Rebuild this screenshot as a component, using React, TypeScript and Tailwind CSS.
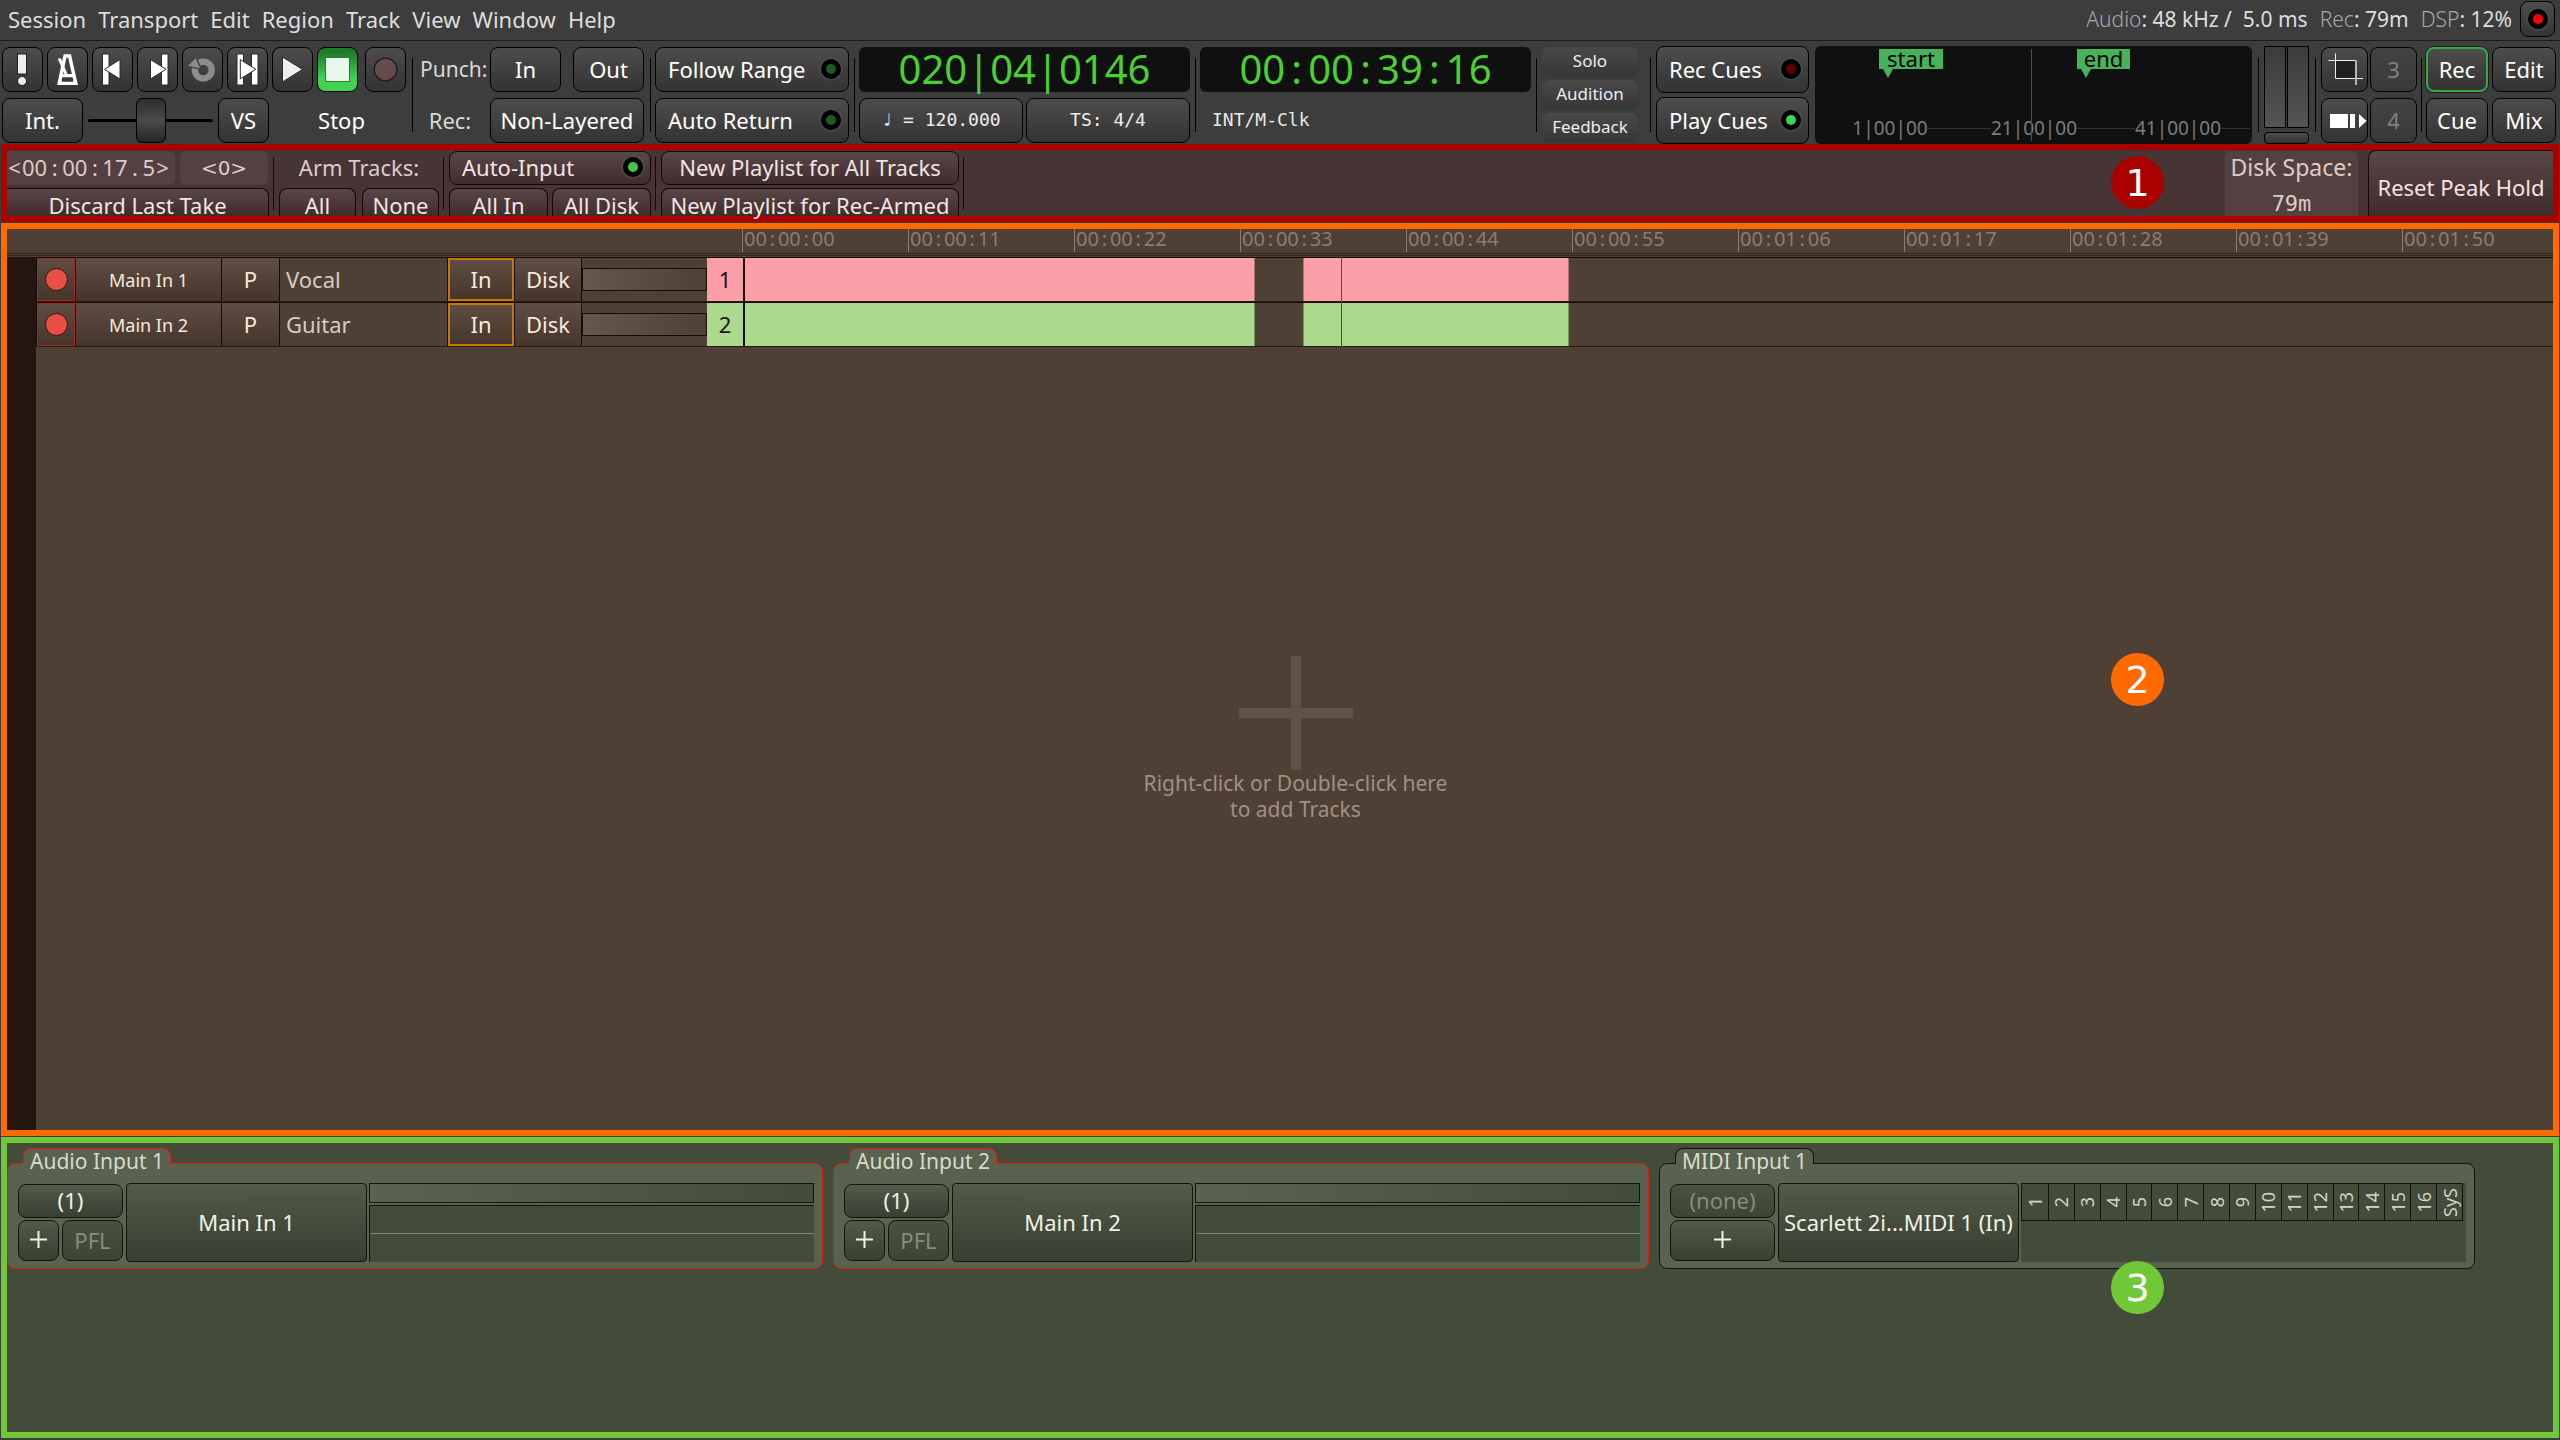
import React from "react";
import { twMerge } from "tailwind-merge";

type Children = { children?: React.ReactNode };

const cx = (...parts: (string | false | undefined)[]) => twMerge(parts.filter(Boolean).join(" "));

/* ---------- shared controls ---------- */

type BtnProps = React.ButtonHTMLAttributes<HTMLButtonElement> & { tone?: "normal" | "dim" | "soft" };

function Btn({ tone = "normal", className, children, ...rest }: BtnProps) {
  return (
    <button
      type="button"
      className={cx(
        "flex shrink-0 items-center justify-center rounded-lg pb-0.5 whitespace-nowrap",
        tone === "normal" && "border border-black bg-linear-to-b from-[#4e4c4d] to-[#343334] text-white",
        tone === "dim" && "border border-black bg-linear-to-b from-[#444344] to-[#393939] text-[#808080]",
        tone === "soft" && "bg-linear-to-b from-[#4a494a] to-[#373637] text-[#eeeeee]",
        className,
      )}
      {...rest}
    >
      {children}
    </button>
  );
}

function Led({ color }: { color: string }) {
  return (
    <span className="flex size-5 shrink-0 items-center justify-center rounded-full bg-black ring-2 ring-[#555555]/40">
      <span className={cx("size-2.5 rounded-full", color)} />
    </span>
  );
}

function LedBtn({ label, led, className }: { label: string; led: string; className: string }) {
  return (
    <Btn className={cx("justify-between pr-[7px] pl-3", className)}>
      <span>{label}</span>
      <Led color={led} />
    </Btn>
  );
}

function Divider({ className }: { className?: string }) {
  return <span className={cx("h-[74px] w-px shrink-0 self-center bg-black", className)} />;
}

function Digits({ value, sep }: { value: string; sep: string }) {
  return (
    <span className="inline-flex whitespace-pre">
      {value
        .split(/([:|<>.])/)
        .filter(Boolean)
        .map((part, i) =>
          /[:|<>.]/.test(part) ? (
            <span key={i} className={cx("text-center", sep)}>
              {part}
            </span>
          ) : (
            <span key={i}>{part}</span>
          ),
        )}
    </span>
  );
}

function Badge({ n, className }: { n: string; className: string }) {
  return (
    <span
      className={cx(
        "absolute flex size-[53px] items-center justify-center rounded-full font-['DejaVu_Sans'] text-[38px] leading-none text-white",
        className,
      )}
    >
      {n}
    </span>
  );
}

/* ---------- menu bar ---------- */

const MENUS = ["Session", "Transport", "Edit", "Region", "Track", "View", "Window", "Help"];

function Stat({ name, children }: Children & { name: string }) {
  return (
    <span className="whitespace-pre">
      <span className="font-light text-[#a8a8a8]">{name}</span>: {children}
    </span>
  );
}

function MenuBar() {
  return (
    <header className="flex h-[41px] items-center justify-between border-b border-[#1c1c1c] pr-[5px] pb-0.5 pl-2 text-[#dedede]">
      <nav className="flex gap-3">
        {MENUS.map((m) => (
          <button type="button" key={m}>
            {m}
          </button>
        ))}
      </nav>
      <div className="flex items-center gap-3 text-[21px]">
        <Stat name="Audio">48 kHz /  5.0 ms</Stat>
        <Stat name="Rec">79m</Stat>
        <Stat name="DSP">12%</Stat>
        <Btn className="-ml-1 h-9 w-[35px] pb-0" aria-label="Log">
          <span className="flex size-5 items-center justify-center rounded-full bg-black ring-2 ring-[#555555]/40">
            <span className="size-2.5 rounded-full bg-[#ff0000]" />
          </span>
        </Btn>
      </div>
    </header>
  );
}

/* ---------- transport toolbar ---------- */

const ICONS: { name: string; art: React.ReactNode }[] = [
  {
    name: "MIDI Panic",
    art: (
      <g fill="#eeeeee" stroke="#1c1c1c">
        <rect x="15.5" y="7" width="9" height="20" />
        <circle cx="20" cy="34" r="4.5" />
      </g>
    ),
  },
  {
    name: "Metronome",
    art: (
      <g fill="none" stroke="#ffffff" strokeWidth="3.4">
        <path d="M18 9H22.6L28.8 36.4H12.2Z" />
        <path d="M14 28.6H27M13 33.6V36M28 33.6V36" />
        <path d="M12.2 11.5L19.4 28" strokeWidth="3" />
      </g>
    ),
  },
  {
    name: "Go to Start",
    art: (
      <g fill="#ffffff" stroke="#2a2a2a">
        <rect x="10.5" y="7" width="6.5" height="31" />
        <path d="M28 12.5V32L12.5 22.3Z" />
      </g>
    ),
  },
  {
    name: "Go to End",
    art: (
      <g fill="#ffffff" stroke="#2a2a2a">
        <rect x="24.5" y="7" width="6.5" height="31" />
        <path d="M13.5 12.5V32L29 22.3Z" />
      </g>
    ),
  },
  {
    name: "Loop",
    art: (
      <g>
        <circle cx="21.3" cy="23" r="8.4" fill="none" stroke="#8c8c8c" strokeWidth="6.4" />
        <path d="M5.5 19.5L14.2 10.5L19.3 22Z" fill="#8c8c8c" />
        <path d="M14.3 11L19.3 22L6 19.6" fill="none" stroke="#3f3f3f" strokeWidth="1.3" />
      </g>
    ),
  },
  {
    name: "Play Range",
    art: (
      <g fill="#ffffff" stroke="#2a2a2a">
        <rect x="10" y="7" width="6.5" height="31" />
        <rect x="24.5" y="7" width="6.5" height="31" />
        <path d="M13.3 12.5V32L28.7 22.3Z" />
      </g>
    ),
  },
  { name: "Play", art: <path d="M10.5 10V35L30.5 22.4Z" fill="#eeeeee" stroke="#2a2a2a" /> },
  {
    name: "Stop",
    art: <rect x="8.5" y="10.5" width="24" height="24" fill="#e9f7ec" stroke="#2c7a38" />,
  },
  { name: "Record", art: <circle cx="20.5" cy="22.5" r="11.3" fill="#664b4b" stroke="#1a1a1a" strokeWidth="1.3" /> },
];

function TransportGroup() {
  return (
    <div className="flex shrink-0 flex-col gap-1.5">
      <div className="flex gap-1">
        {ICONS.map(({ name, art }) => (
          <Btn
            key={name}
            aria-label={name}
            className={cx(
              "h-[45px] w-[41px] pb-0",
              name === "Stop" && "from-[#207a2c] from-10% to-[#3fd350] to-70%",
              name === "Record" && "ml-[3px]",
            )}
          >
            <svg width="41" height="45" viewBox="0 0 41 45" className="shrink-0">
              {art}
            </svg>
          </Btn>
        ))}
      </div>
      <div className="flex items-center">
        <Btn className="h-[45px] w-[81px]">Int.</Btn>
        <input
          type="range"
          aria-label="Shuttle speed"
          className="mx-[5px] h-[45px] w-[125px] appearance-none bg-transparent [&::-webkit-slider-runnable-track]:h-[3px] [&::-webkit-slider-runnable-track]:rounded-full [&::-webkit-slider-runnable-track]:bg-black [&::-webkit-slider-thumb]:-mt-[21px] [&::-webkit-slider-thumb]:h-[45px] [&::-webkit-slider-thumb]:w-[30px] [&::-webkit-slider-thumb]:appearance-none [&::-webkit-slider-thumb]:rounded-md [&::-webkit-slider-thumb]:border [&::-webkit-slider-thumb]:border-black [&::-webkit-slider-thumb]:bg-linear-to-b [&::-webkit-slider-thumb]:from-[#2e2e2e] [&::-webkit-slider-thumb]:via-[#4a4a4a] [&::-webkit-slider-thumb]:to-[#262626]"
        />
        <Btn className="h-[45px] w-[51px]">VS</Btn>
        <span className="flex-1 pb-0.5 pl-2 text-center text-white">Stop</span>
      </div>
    </div>
  );
}

function PunchGroup() {
  return (
    <div className="ml-px grid shrink-0 grid-cols-[72px_154px] gap-x-1 gap-y-1.5 text-[#d8d8d8]">
      <span className="self-center pb-0.5 pl-1.5 text-[21px]">Punch:</span>
      <div className="flex justify-between">
        <Btn className="h-[45px] w-[71px]">In</Btn>
        <Btn className="h-[45px] w-[71px]">Out</Btn>
      </div>
      <span className="self-center pb-0.5 text-center">Rec:</span>
      <Btn className="h-[45px]">Non-Layered</Btn>
    </div>
  );
}

function Flag({ label, className }: { label: string; className: string }) {
  return (
    <span className={cx("absolute top-[3px]", className)}>
      <span className="flex h-5 items-center justify-center bg-[#46b35a] pb-0.5 text-black">{label}</span>
      <svg width="18" height="9" viewBox="0 0 18 9" className="block">
        <path d="M4 0H14L9 9Z" fill="#46b35a" />
      </svg>
    </span>
  );
}

function MiniTimeline() {
  return (
    <div className="relative ml-1.5 flex h-[98px] min-w-0 flex-1 items-end rounded-md bg-[#101010] pb-[3px] pl-[3px]">
      {["1|00|00", "21|00|00", "41|00|00"].map((t, i) => (
        <span key={t} className="flex w-36 items-center text-[19px] text-[#7c7c7c]">
          <span className={cx("h-px flex-1", i > 0 && "bg-[#333333]")} />
          <span className="leading-[26px]">{t}</span>
          <span className="h-px flex-1 bg-[#333333]" />
        </span>
      ))}
      <Flag label="start" className="left-16 w-16" />
      <Flag label="end" className="left-[262px] w-[53px]" />
      <span className="absolute top-[3px] bottom-[3px] left-[216px] w-px bg-[#e01010]" />
    </div>
  );
}

function Clock({ value, children }: Children & { value: string }) {
  return (
    <div className="ml-1 flex w-[331px] shrink-0 flex-col gap-1.5">
      <div className="flex h-[45px] items-center justify-center rounded-md bg-[#101010] pb-0.5 text-[40px] leading-10 text-[#4ccf30]">
        <Digits value={value} sep="w-[23px]" />
      </div>
      {children}
    </div>
  );
}

function Toolbar() {
  return (
    <div className="flex h-[103px] items-center pt-[5px] pr-1 pl-0.5">
      <TransportGroup />
      <Divider className="ml-1.5" />
      <PunchGroup />
      <Divider className="ml-1.5" />
      <div className="ml-1 flex shrink-0 flex-col gap-1.5">
        <LedBtn label="Follow Range" led="bg-[#1f5a22]" className="h-[45px] w-[194px]" />
        <LedBtn label="Auto Return" led="bg-[#1f5a22]" className="h-[45px] w-[194px]" />
      </div>
      <Divider className="ml-[5px]" />
      <Clock value="020|04|0146">
        <div className="flex justify-between font-['DejaVu_Sans_Mono'] text-lg">
          <Btn className="h-[45px] w-[164px] text-[#eeeeee]">♩ = 120.000</Btn>
          <Btn className="h-[45px] w-[164px] text-[#eeeeee]">TS: 4/4</Btn>
        </div>
      </Clock>
      <Divider className="ml-[5px]" />
      <Clock value="00:00:39:16">
        <span className="flex h-[45px] items-center pb-0.5 pl-3 font-['DejaVu_Sans_Mono'] text-lg text-[#e8e8e8]">
          INT/M-Clk
        </span>
      </Clock>
      <Divider className="ml-[5px]" />
      <div className="ml-[5px] flex shrink-0 flex-col gap-[3px] text-[17px]">
        <Btn tone="soft" className="h-[30px] w-24">Solo</Btn>
        <Btn tone="soft" className="h-[30px] w-24">Audition</Btn>
        <Btn tone="soft" className="h-[30px] w-24">Feedback</Btn>
      </div>
      <Divider className="ml-3" />
      <div className="ml-[5px] flex shrink-0 flex-col gap-1">
        <LedBtn label="Rec Cues" led="bg-[#600000]" className="h-[47px] w-[153px]" />
        <LedBtn label="Play Cues" led="bg-[#3fd350]" className="h-[47px] w-[153px]" />
      </div>
      <MiniTimeline />
      <Divider className="ml-1.5" />
      <div className="ml-[5px] flex w-[45px] shrink-0 flex-col gap-1">
        <div className="grid h-[82px] grid-cols-2 gap-px">
          <span className="border border-black bg-linear-to-b from-[#3b3b3b] to-[#555555]" />
          <span className="border border-black bg-linear-to-b from-[#3b3b3b] to-[#555555]" />
        </div>
        <Btn className="h-3 rounded-sm" aria-label="Reset peak" />
      </div>
      <Divider className="ml-1.5" />
      <div className="ml-[5px] grid shrink-0 grid-cols-[47px_47px] gap-x-0.5 gap-y-1.5">
        <Btn className="h-[45px] pb-0" aria-label="Trim range">
          <svg width="47" height="45" viewBox="0 0 47 45" className="shrink-0">
            <rect x="15" y="14" width="20" height="17" fill="#222222" />
            <path d="M7.5 13.5H35M14.5 6.5V31.5H42" fill="none" stroke="#eeeeee" />
            <path d="M35 13.5V38" stroke="#b5b5b5" strokeWidth="2" />
          </svg>
        </Btn>
        <Btn tone="dim" className="h-[45px]">3</Btn>
        <Btn className="h-[45px] pb-0" aria-label="Play clip">
          <svg width="47" height="45" viewBox="0 0 47 45" className="shrink-0">
            <path d="M9 16H27V30H9ZM29 16H34V30H29ZM38 16L45.5 23L38 30Z" fill="#ffffff" />
          </svg>
        </Btn>
        <Btn tone="dim" className="h-[45px]">4</Btn>
      </div>
      <Divider className="ml-1" />
      <div className="ml-1 grid shrink-0 grid-cols-[62px_64px] gap-x-1 gap-y-1.5">
        <Btn className="h-[45px] border-2 border-[#34a843] ring-1 ring-black/50">Rec</Btn>
        <Btn className="h-[45px]">Edit</Btn>
        <Btn className="h-[45px]">Cue</Btn>
        <Btn className="h-[45px]">Mix</Btn>
      </div>
    </div>
  );
}

/* ---------- recorder bar ---------- */

const ROSE = "border-[#190606] from-[#5a4646] to-[#3f2c2c] text-[#f3e4e4]";

function RecBtn({ low, className, children }: Children & { low?: boolean; className?: string }) {
  return (
    <Btn
      className={cx(
        ROSE,
        low ? "h-7 rounded-b-none border-b-0 pt-1 pb-0 leading-[22px]" : "h-[34px]",
        className,
      )}
    >
      {children}
    </Btn>
  );
}

function RecorderBar() {
  return (
    <section className="relative mx-px h-[78px] border-[6px] border-[#a90000] bg-[#473536] text-[#dccbcb]">
      <div className="flex h-[66px] items-start">
        <div className="mt-px flex shrink-0 flex-col gap-[3px]">
          <div className="flex gap-[5px]">
            <span className="flex h-[34px] w-[168px] items-center rounded-r-md bg-[#544041] pb-0.5">
              <Digits value="<00:00:17.5>" sep="w-[15px]" />
            </span>
            <span className="flex h-[34px] w-[88px] items-center justify-center rounded-md bg-[#544041] font-['DejaVu_Sans'] text-xl">
              {"<0>"}
            </span>
          </div>
          <RecBtn low className="w-[262px] rounded-l-none border-l-0">Discard Last Take</RecBtn>
        </div>
        <Divider className="ml-1 h-[53px] bg-[#190606]" />
        <div className="mt-px ml-[5px] flex w-[160px] shrink-0 flex-col gap-[3px]">
          <span className="h-[34px] text-center leading-8">Arm Tracks:</span>
          <div className="flex justify-between">
            <RecBtn low className="w-[77px]">All</RecBtn>
            <RecBtn low className="w-[77px]">None</RecBtn>
          </div>
        </div>
        <Divider className="ml-1 h-[53px] bg-[#190606]" />
        <div className="mt-px ml-[5px] flex w-[202px] shrink-0 flex-col gap-[3px]">
          <RecBtn className="justify-between pr-[7px] pl-3">
            <span>Auto-Input</span>
            <Led color="bg-[#45c44b]" />
          </RecBtn>
          <div className="flex justify-between">
            <RecBtn low className="w-[99px]">All In</RecBtn>
            <RecBtn low className="w-[99px]">All Disk</RecBtn>
          </div>
        </div>
        <Divider className="ml-1 h-[53px] bg-[#190606]" />
        <div className="mt-px ml-[5px] flex w-[298px] shrink-0 flex-col gap-[3px]">
          <RecBtn>New Playlist for All Tracks</RecBtn>
          <RecBtn low>New Playlist for Rec-Armed</RecBtn>
        </div>
        <Divider className="ml-1 h-[53px] bg-[#190606]" />
        <div className="mt-px ml-auto flex h-[65px] w-[133px] shrink-0 flex-col rounded-t-md bg-[#544041] text-center">
          <span className="text-[23px] leading-8">Disk Space:</span>
          <span className="pt-2.5 font-['DejaVu_Sans_Mono'] leading-[22px]">79m</span>
        </div>
        <RecBtn className="ml-2.5 h-[66px] w-[185px] rounded-r-none rounded-b-none border-r-0 border-b-0 pt-2">
          Reset Peak Hold
        </RecBtn>
      </div>
      <Badge n="1" className="top-1.5 right-[389px] bg-[#a90000]" />
    </section>
  );
}

/* ---------- track list ---------- */

const MARKS = ["00:00:00", "00:00:11", "00:00:22", "00:00:33", "00:00:44", "00:00:55", "00:01:06", "00:01:17", "00:01:28", "00:01:39", "00:01:50"];

const TRACKS = [
  { n: 1, name: "Vocal", fill: "bg-[#fc9fa9]" },
  { n: 2, name: "Guitar", fill: "bg-[#abd98d]" },
];

const CELL = "flex shrink-0 items-center justify-center border-r border-[#170b03] bg-linear-to-b from-[#5f4e44] to-[#46352b] text-[#f7eadf]";

function TrackRow({ n, name, fill }: { n: number; name: string; fill: string }) {
  return (
    <div className="flex h-[45px] border-y border-t-[#170b03] border-b-[#2b1c13]">
      <button type="button" aria-label={`Arm ${name}`} className={cx(CELL, "w-10 border-l")}>
        <span className="flex h-full w-full items-center justify-center border border-[#a8281d]">
          <span className="size-[23px] rounded-full border border-[#3a1010] bg-[#e94f45]" />
        </span>
      </button>
      <button type="button" className={cx(CELL, "w-[146px] text-lg")}>Main In {n}</button>
      <button type="button" className={cx(CELL, "w-[58px] pb-0.5")}>P</button>
      <input
        aria-label={`Track ${n} name`}
        defaultValue={name}
        className="w-[168px] shrink-0 border-r border-[#170b03] bg-transparent px-1.5 pb-0.5 text-[#d9ccc0]"
      />
      <button type="button" className={cx(CELL, "w-[67px]")}>
        <span className="flex h-full w-full items-center justify-center border-2 border-[#c97608] pb-0.5">In</span>
      </button>
      <button type="button" className={cx(CELL, "w-[67px] pb-0.5")}>Disk</button>
      <span className="h-[23px] w-[125px] shrink-0 self-center border border-[#170b03] bg-linear-to-r from-[#66574b] to-[#4f4036]" />
      <span
        className={cx(
          "flex w-[38px] shrink-0 items-center justify-center border-r-2 border-[#170b03] pb-0.5 text-[#241212]",
          fill,
        )}
      >
        {n}
      </span>
      <div className="flex min-w-0 flex-1">
        <span className={cx("w-[510px] border-r border-black/30", fill)} />
        <span className={cx("ml-12 w-[266px] border-x border-black/30", fill)} />
      </div>
    </div>
  );
}

function TrackArea() {
  return (
    <section className="relative mx-px mt-px flex flex-1 flex-col border-[6px] border-[#ff6a00] bg-[#4f4036]">
      <div className="flex h-6 pl-[735px]">
        {MARKS.map((m) => (
          <span
            key={m}
            className="flex h-[23px] w-[166px] shrink-0 border-l border-[#8c7c6f] pl-px text-xl leading-5 text-[#8c7c6f] last:w-auto last:shrink"
          >
            <Digits value={m} sep="w-[11px]" />
          </span>
        ))}
      </div>
      <div className="h-1 border-t border-[#33241b]">
        <div className="mt-px h-px bg-[#33241b]" />
      </div>
      <div className="flex flex-1">
        <div className="w-[29px] shrink-0 bg-[#24160e]" />
        <div className="flex min-w-0 flex-1 flex-col">
          <div className="relative">
            {TRACKS.map((t) => (
              <TrackRow key={t.n} {...t} />
            ))}
            <span className="absolute inset-y-0 left-[1305px] w-px bg-[#e01010]" />
          </div>
          <div className="flex flex-1 flex-col items-center justify-center pl-0.5 text-center text-[21px] leading-[26px] text-[#a09082]">
            <svg width="114" height="114" viewBox="0 0 114 114">
              <path d="M52 0H62V52H114V62H62V114H52V62H0V52H52Z" fill="#5f5247" />
            </svg>
            <p>
              Right-click or Double-click here
              <br />
              to add Tracks
            </p>
          </div>
        </div>
      </div>
      <Badge n="2" className="top-[424px] right-[389px] bg-[#ff6a00]" />
    </section>
  );
}

/* ---------- inputs ---------- */

const GREEN = "border-[#10160a] from-[#525a49] to-[#393f31] text-[#eef3e6]";
const GREEN_DIM = "border-[#10160a] from-[#49513f] to-[#3d4435] text-[#858d7b]";

function Panel({ title, armed, children }: Children & { title: string; armed: boolean }) {
  const line = armed ? "border-[#e01c0c]" : "border-[#10160a]";
  return (
    <section className="w-[816px]">
      <h2
        className={cx(
          "relative z-10 -mb-px ml-4 h-4 w-fit rounded-t-lg border border-b-0 bg-[#59614f] px-1.5 text-[21px] leading-6 font-normal text-[#d5dccb]",
          line,
        )}
      >
        {title}
      </h2>
      <div className={cx("flex h-[106px] items-start rounded-lg border bg-[#59614f] pt-[19px] pr-2 pl-2.5", line)}>
        {children}
      </div>
    </section>
  );
}

function Plus() {
  return (
    <svg width="17" height="17" viewBox="0 0 17 17">
      <path d="M8.5 0V17M0 8.5H17" stroke="#eef3e6" strokeWidth="2" />
    </svg>
  );
}

function AudioPanel({ n }: { n: number }) {
  return (
    <Panel title={`Audio Input ${n}`} armed>
      <div className="mt-px grid w-[105px] shrink-0 grid-cols-[41px_61px] gap-x-[3px] gap-y-0.5">
        <Btn className={cx("col-span-2 h-[34px]", GREEN)}>(1)</Btn>
        <Btn className={cx("h-[41px]", GREEN)} aria-label={`Add track from input ${n}`}>
          <Plus />
        </Btn>
        <Btn className={cx("h-[41px]", GREEN_DIM)}>PFL</Btn>
      </div>
      <Btn className={cx("ml-[3px] h-[79px] w-[241px] rounded-sm", GREEN)}>Main In {n}</Btn>
      <div className="ml-0.5 flex min-w-0 flex-1 flex-col gap-0.5">
        <span className="h-5 border border-[#10160a] bg-linear-to-r from-[#5a6250] to-[#434b3b]" />
        <span className="h-[57px] border-t border-l border-[#10160a] bg-[#434b3b]">
          <span className="mt-[27px] block h-px bg-[#7d8473]" />
        </span>
      </div>
    </Panel>
  );
}

const CHANNELS = ["1", "2", "3", "4", "5", "6", "7", "8", "9", "10", "11", "12", "13", "14", "15", "16", "SyS"];

function MidiPanel() {
  return (
    <Panel title="MIDI Input 1" armed={false}>
      <div className="mt-px flex w-[105px] shrink-0 flex-col gap-0.5">
        <Btn className={cx("h-[34px]", GREEN_DIM)}>(none)</Btn>
        <Btn className={cx("h-[41px]", GREEN)} aria-label="Add track from MIDI input">
          <Plus />
        </Btn>
      </div>
      <Btn className={cx("ml-[3px] h-[79px] w-[241px] rounded-sm", GREEN)}>Scarlett 2i...MIDI 1 (In)</Btn>
      <div className="ml-0.5 h-[79px] min-w-0 flex-1 bg-[#434b3b] pr-[3px]">
        <div className="grid h-[38px] grid-cols-17 border border-[#10160a] text-lg leading-none text-[#cfd6c5]">
          {CHANNELS.map((c, i) => (
            <span key={c} className={cx("flex items-center justify-center", i > 0 && "border-l border-[#10160a]")}>
              <span className="rotate-180 [writing-mode:vertical-rl]">{c}</span>
            </span>
          ))}
        </div>
      </div>
    </Panel>
  );
}

function InputArea() {
  return (
    <section className="relative mx-px mt-px mb-0.5 flex h-[301px] items-start gap-2.5 border-[6px] border-[#71c837] bg-[#434b3b] pt-[5px]">
      <AudioPanel n={1} />
      <AudioPanel n={2} />
      <MidiPanel />
      <Badge n="3" className="top-[118px] right-[389px] bg-[#71c837]" />
    </section>
  );
}

export default function App() {
  return (
    <div className="flex min-h-screen flex-col bg-[#3d3d3d] font-['Noto_Sans','DejaVu_Sans',sans-serif] text-[22px] leading-7">
      <MenuBar />
      <Toolbar />
      <RecorderBar />
      <TrackArea />
      <InputArea />
    </div>
  );
}
